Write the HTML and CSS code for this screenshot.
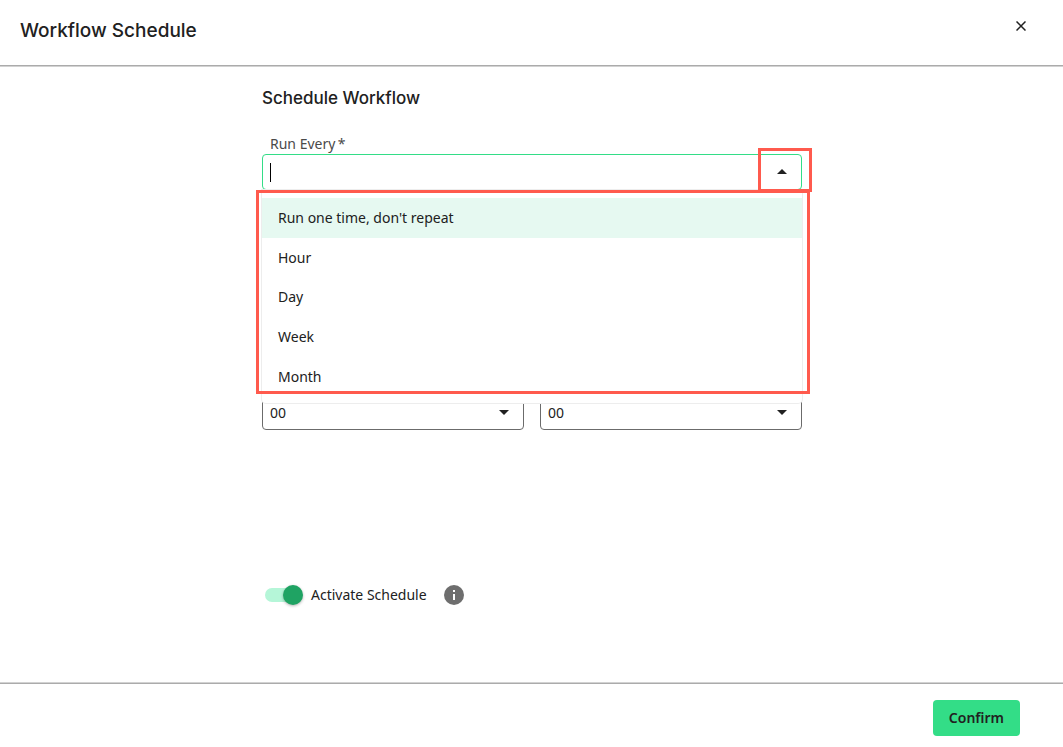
FILE: index.html
```html
<!DOCTYPE html>
<html lang="en">
<head>
<meta charset="utf-8">
<title>Workflow Schedule</title>
<link rel="stylesheet" href="styles.css">
</head>
<body>
<div class="dialog">
  <header class="dialog-header">
    <h1 class="dialog-title">Workflow Schedule</h1>
    <button class="close-button" type="button" aria-label="Close">
      <svg width="10" height="10" viewBox="0 0 10 10"><path d="M0.5 0.5 9.5 9.5M9.5 0.5 0.5 9.5" fill="none" stroke="currentColor" stroke-width="1.5"/></svg>
    </button>
  </header>

  <main class="dialog-body">
    <form class="schedule-form" id="schedule">
      <h2 class="section-title">Schedule Workflow</h2>

      <label class="field-label" for="run-every">Run Every&#8201;*</label>
      <div class="combobox">
        <input class="combobox-input" id="run-every" type="text" role="combobox" aria-expanded="true" aria-controls="run-options" autocomplete="off">
        <span class="caret"></span>
        <button class="combobox-toggle" type="button" aria-label="Close options">
          <svg width="10" height="5" viewBox="0 0 10 5"><path d="M0 5 5 0 10 5Z" fill="currentColor"/></svg>
        </button>
        <span class="callout callout-toggle"></span>
        <div class="popup">
          <ul class="options" id="run-options" role="listbox">
            <li class="option option-active" role="option" aria-selected="true">Run one time, don't repeat</li>
            <li class="option" role="option">Hour</li>
            <li class="option" role="option">Day</li>
            <li class="option" role="option">Week</li>
            <li class="option" role="option">Month</li>
          </ul>
        </div>
        <span class="callout callout-options"></span>
      </div>

      <div class="time-row">
        <div class="select-box">
          <select class="select" aria-label="Hour"><option>00</option></select>
          <svg class="select-arrow" width="10" height="5" viewBox="0 0 10 5"><path d="M0 0 5 5 10 0Z" fill="currentColor"/></svg>
        </div>
        <div class="select-box">
          <select class="select" aria-label="Minute"><option>00</option></select>
          <svg class="select-arrow" width="10" height="5" viewBox="0 0 10 5"><path d="M0 0 5 5 10 0Z" fill="currentColor"/></svg>
        </div>
      </div>

      <div class="activate-row">
        <input class="switch" id="activate" type="checkbox" role="switch" checked>
        <label class="activate-label" for="activate">Activate Schedule</label>
        <svg class="info-icon" width="20" height="20" viewBox="0 0 20 20"><circle cx="10" cy="10" r="10" fill="#6e6e6e"/><path d="M9 5h2v2H9zM9 9h2v6H9z" fill="#fff"/></svg>
      </div>
    </form>
  </main>

  <footer class="dialog-footer">
    <button class="confirm-button" type="submit" form="schedule">Confirm</button>
  </footer>
</div>
</body>
</html>
```
FILE: styles.css
```css
* {
  box-sizing: border-box;
}

body {
  margin: 0;
  background: #fff;
  color: #212121;
  font: 14px/20px "Noto Sans", sans-serif;
}

button,
input,
select {
  margin: 0;
  color: inherit;
  font: inherit;
}

.dialog {
  display: flex;
  flex-direction: column;
  min-height: 100vh;
}

.dialog-header {
  display: flex;
  align-items: flex-start;
  justify-content: space-between;
  padding: 16px 32px 19px 20px;
  border-bottom: 1px solid #ababab;
  box-shadow: 0 1px 0 #d2d2d2;
}

.dialog-title {
  margin: 0;
  font: 500 19px/30px Inter, sans-serif;
}

.close-button {
  display: flex;
  align-items: center;
  justify-content: center;
  width: 20px;
  height: 20px;
  padding: 0;
  border: 0;
  background: none;
}

.dialog-body {
  flex: 1;
  padding: 20px 0 0 1px;
}

.schedule-form {
  max-width: 540px;
  margin: 0 auto;
}

.section-title {
  margin: 0 0 24px;
  font: 500 17px/24px Inter, sans-serif;
}

.field-label {
  display: block;
  padding-left: 8px;
  color: #4a4a4a;
}

.combobox {
  position: relative;
  display: flex;
  height: 36px;
  border: 1px solid #33dd87;
  border-radius: 4px;
}

.combobox-input {
  flex: 1;
  min-width: 0;
  padding: 0 8px;
  border: 0;
  outline: 0;
  background: none;
}

.caret {
  position: absolute;
  top: 8px;
  left: 7px;
  width: 1px;
  height: 19px;
  background: #000;
}

.combobox-toggle {
  display: flex;
  align-items: center;
  justify-content: center;
  width: 38px;
  padding: 0 0 2px;
  border: 0;
  background: none;
}

.popup {
  position: absolute;
  z-index: 1;
  top: 35px;
  right: -1px;
  left: -1px;
  padding: 8px 0 6px;
  border-radius: 0 0 4px 4px;
  background: #fff;
  box-shadow: 0 0 0 1px #ededed;
}

.options {
  display: grid;
  grid-auto-rows: 1fr;
  height: 199px;
  margin: 0;
  padding: 0;
  list-style: none;
}

.option {
  display: flex;
  align-items: center;
  padding: 0 16px;
}

.option-active {
  background: #e6f9f1;
}

.callout {
  position: absolute;
  z-index: 2;
  border: 3px solid #ff5a4d;
  pointer-events: none;
}

.callout-toggle {
  top: -7px;
  right: -11px;
  width: 54px;
  height: 44px;
}

.callout-options {
  top: 35px;
  right: -9px;
  left: -7px;
  height: 204px;
}

.time-row {
  display: grid;
  grid-template-columns: 1fr 1fr;
  gap: 16px;
  margin-top: 204px;
}

.select-box {
  position: relative;
}

.select {
  display: block;
  width: 100%;
  height: 36px;
  padding: 2px 32px 0 7px;
  border: 1px solid #6b6b6b;
  border-radius: 4px;
  background: #fff;
  appearance: none;
}

.select-arrow {
  position: absolute;
  top: 16px;
  right: 15px;
  pointer-events: none;
}

.activate-row {
  display: flex;
  align-items: center;
  margin-top: 155px;
  padding-left: 3px;
}

.switch {
  position: relative;
  width: 36px;
  height: 14px;
  border-radius: 7px;
  background: #b5f6d8;
  appearance: none;
}

.switch::before {
  content: "";
  position: absolute;
  top: -3px;
  right: -2px;
  width: 20px;
  height: 20px;
  border-radius: 50%;
  background: #1fa363;
  box-shadow: 0 1px 3px rgb(0 0 0 / 30%);
}

.activate-label {
  margin: 0 17px 0 10px;
}

.dialog-footer {
  display: flex;
  justify-content: flex-end;
  padding: 16px 43px 11px;
  border-top: 1px solid #ababab;
  box-shadow: 0 -1px 0 #d2d2d2;
}

.confirm-button {
  height: 36px;
  padding: 0 16px;
  border: 0;
  border-radius: 4px;
  background: #33dd87;
  font-weight: 600;
}
```
